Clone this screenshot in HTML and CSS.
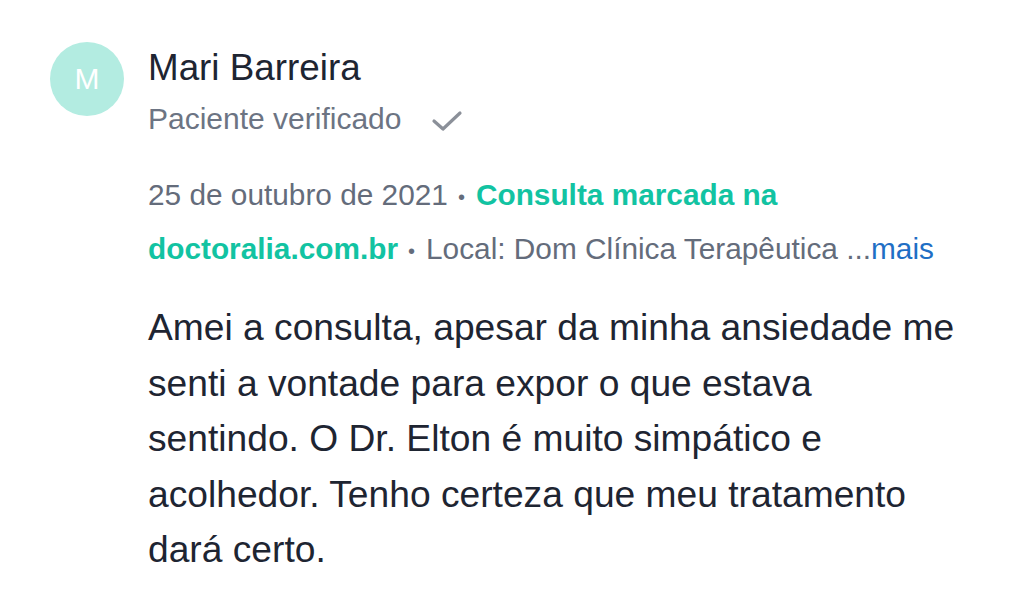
FILE: index.html
```html
<!DOCTYPE html>
<html lang="pt-BR">

<head>
    <meta charset="UTF-8">
    <meta name="viewport" content="width=device-width, initial-scale=1.0">
    <title>Opinião - Mari Barreira</title>
    <link rel="stylesheet" href="styles.css">
</head>

<body>
    <div class="review">
        <div class="avatar">M</div>
        <div class="content">
            <div class="name">Mari Barreira</div>
            <div class="verified">
                Paciente verificado
                <svg class="check" width="32" height="24" viewBox="0 0 32 24">
                    <polyline points="3,12 12,20 29,4" fill="none" stroke="#8b9099" stroke-width="3.2"
                        stroke-linecap="round" stroke-linejoin="round" />
                </svg>
            </div>
            <div class="meta">
                25 de outubro de 2021<span class="dot">•</span><span class="green">Consulta marcada na
                    doctoralia.com.br</span><span class="dot">•</span>Local: Dom Clínica Terapêutica ...<a href="#"
                    class="more">mais</a>
            </div>
            <p class="text">Amei a consulta, apesar da minha ansiedade me senti a vontade para expor o que estava
                sentindo. O Dr. Elton é muito simpático e acolhedor. Tenho certeza que meu tratamento dará certo.</p>
        </div>
    </div>
</body>

</html>
```

FILE: styles.css
```css
body {
    margin: 0;
    background-color: #ffffff;
    font-family: "Liberation Sans", Arial, sans-serif;
}

.review {
    display: flex;
    gap: 24px;
    padding: 42px 40px 0 50px;
}

.avatar {
    flex-shrink: 0;
    width: 74px;
    height: 74px;
    border-radius: 50%;
    background-color: #b3ece1;
    color: #ffffff;
    font-size: 30px;
    display: flex;
    justify-content: center;
    align-items: center;
}

.content {
    width: 820px;
}

.name {
    font-size: 36.8px;
    line-height: 48px;
    color: #1e2532;
    margin-top: 2px;
}

.verified {
    font-size: 30px;
    line-height: 48px;
    color: #6c7483;
    margin-top: 3px;
    display: flex;
    align-items: center;
}

.check {
    margin-left: 30px;
    margin-top: 4px;
}

.meta {
    margin-top: 25px;
    font-size: 29.8px;
    line-height: 54px;
    color: #646c7b;
}

.dot {
    display: inline-block;
    font-size: 20px;
    line-height: 20px;
    margin: 0 11px 0 10px;
    vertical-align: 1px;
}

.green {
    color: #12c3a2;
    font-weight: bold;
}

.more {
    color: #1f6fc5;
    text-decoration: none;
}

.text {
    margin: 24px 0 0 0;
    font-size: 37.2px;
    line-height: 55.5px;
    color: #1e2532;
}
```
